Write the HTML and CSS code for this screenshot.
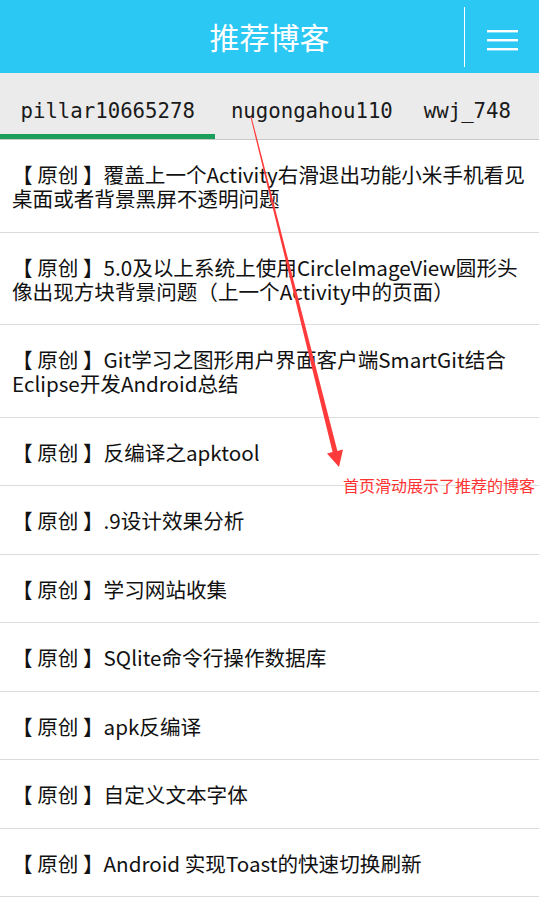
FILE: index.html
```html
<!DOCTYPE html>
<html lang="zh-CN">
<head>
<meta charset="utf-8">
<title>推荐博客</title>
<link rel="stylesheet" href="styles.css">
</head>
<body>
<div class="page">
  <header class="appbar">
    <div class="appbar-side"></div>
    <h1 class="appbar-title">推荐博客</h1>
    <div class="appbar-side appbar-actions">
      <span class="appbar-divider"></span>
      <button class="menu-btn" aria-label="菜单">
        <svg width="31" height="21" viewBox="0 0 31 21">
          <rect x="0" y="0" width="31" height="2.4" fill="#fff"/>
          <rect x="0" y="9" width="31" height="2.4" fill="#fff"/>
          <rect x="0" y="18" width="31" height="2.4" fill="#fff"/>
        </svg>
      </button>
    </div>
  </header>

  <nav class="tabs">
    <div class="tab tab-active">pillar10665278</div>
    <div class="tab">nugongahou110</div>
    <div class="tab">wwj_748</div>
  </nav>

  <ul class="posts">
    <li class="post">【 原创 】覆盖上一个Activity右滑退出功能小米手机看见桌面或者背景黑屏不透明问题</li>
    <li class="post">【 原创 】5.0及以上系统上使用CircleImageView圆形头像出现方块背景问题（上一个Activity中的页面）</li>
    <li class="post">【 原创 】Git学习之图形用户界面客户端SmartGit结合Eclipse开发Android总结</li>
    <li class="post">【 原创 】反编译之apktool</li>
    <li class="post">【 原创 】.9设计效果分析</li>
    <li class="post">【 原创 】学习网站收集</li>
    <li class="post">【 原创 】SQlite命令行操作数据库</li>
    <li class="post">【 原创 】apk反编译</li>
    <li class="post">【 原创 】自定义文本字体</li>
    <li class="post">【 原创 】Android 实现Toast的快速切换刷新</li>
    <li class="post"></li>
  </ul>

  <svg class="annot-arrow" width="539" height="923" viewBox="0 0 539 923">
    <polygon fill="#ff3a3a" points="250.5,117.1 332.6,452.1 327,453.5 339,467 343,449.5 337.4,450.9 251.5,116.9"/>
  </svg>
  <div class="annot-text">首页滑动展示了推荐的博客</div>
</div>
</body>
</html>
```
FILE: styles.css
```css
html, body {
  margin: 0;
  padding: 0;
  background: #ffffff;
}
body {
  font-family: "Noto Sans CJK SC", "Noto Sans", sans-serif;
  color: #111;
  overflow: hidden;
}
.page {
  position: relative;
  width: 539px;
  height: 923px;
  overflow: hidden;
}
.appbar {
  height: 73px;
  background: #2bc8f4;
  display: grid;
  grid-template-columns: 1fr auto 1fr;
  align-items: center;
}
.appbar-title {
  margin: 0;
  color: #fff;
  font-size: 30px;
  font-weight: 400;
  line-height: 73px;
  letter-spacing: 0;
}
.appbar-actions {
  display: flex;
  justify-content: flex-end;
  align-items: center;
  height: 73px;
}
.appbar-divider {
  width: 1.5px;
  height: 60px;
  background: #fff;
  margin-top: 1px;
}
.menu-btn {
  border: 0;
  background: transparent;
  padding: 0;
  margin: 0 21px 0 22px;
  width: 31px;
  height: 21px;
  display: flex;
  margin-top: 7px;
}
.menu-btn svg {
  display: block;
}
.tabs {
  height: 66px;
  background: #ebebeb;
  border-bottom: 1px solid #c9c9c9;
  display: flex;
  align-items: stretch;
  font-family: "DejaVu Sans Mono", monospace;
  font-size: 20.7px;
  line-height: 24px;
  color: #1a1a1a;
}
.tab {
  padding: 0 15.5px 16px;
  display: flex;
  align-items: flex-end;
  box-sizing: border-box;
}
.tab-active {
  padding-left: 20.5px;
  padding-right: 20.5px;
  padding-bottom: 11px;
  border-bottom: 5px solid #1b9e5c;
}
.posts {
  list-style: none;
  margin: 0;
  padding: 0;
}
.post {
  padding: 22px 10px 21.5px 12px;
  font-size: 20.6px;
  line-height: 24px;
  border-bottom: 1px solid #dcdcdc;
  min-height: 24px;
}
.annot-arrow {
  position: absolute;
  left: 0;
  top: 0;
  pointer-events: none;
}
.annot-text {
  position: absolute;
  left: 343px;
  top: 475px;
  font-size: 16px;
  line-height: 20px;
  color: #ff3333;
  white-space: nowrap;
}
```
